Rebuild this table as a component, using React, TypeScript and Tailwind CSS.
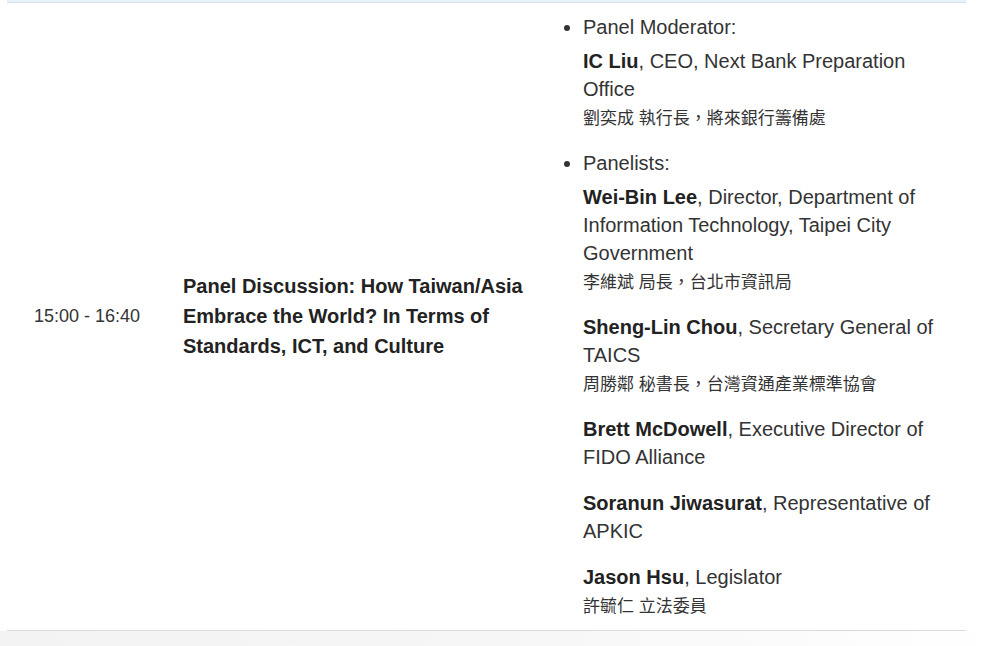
import React from 'react';

type Person = {
  name: string;
  role: string;
  zh?: string;
};

type Group = {
  label: string;
  people: Person[];
};

const groups: Group[] = [
  {
    label: 'Panel Moderator:',
    people: [{ name: 'IC Liu', role: ', CEO, Next Bank Preparation Office', zh: '劉奕成 執行長，將來銀行籌備處' }],
  },
  {
    label: 'Panelists:',
    people: [
      {
        name: 'Wei-Bin Lee',
        role: ', Director, Department of Information Technology, Taipei City Government',
        zh: '李維斌 局長，台北市資訊局',
      },
      { name: 'Sheng-Lin Chou', role: ', Secretary General of TAICS', zh: '周勝鄰 秘書長，台灣資通產業標準協會' },
      { name: 'Brett McDowell', role: ', Executive Director of FIDO Alliance' },
      { name: 'Soranun Jiwasurat', role: ', Representative of APKIC' },
      { name: 'Jason Hsu', role: ', Legislator', zh: '許毓仁 立法委員' },
    ],
  },
];

function Speaker({ p }: { p: Person }) {
  return (
    <div className="leading-[28px]">
      <span className="font-bold text-[#222]">{p.name}</span>
      {p.role}
      {p.zh ? <div className="pt-[4px] text-[17px] leading-[24px]">{p.zh}</div> : null}
    </div>
  );
}

export default function App() {
  return (
    <div
      className="relative h-[646px] w-[999px] overflow-hidden bg-white text-[#333]"
      style={{ fontFamily: '"Liberation Sans", "Noto Sans CJK TC", Arial, sans-serif' }}
    >
      <div className="mx-[7px] w-[959px]">
        <div className="h-[3px] border-b border-[#d6e1eb] bg-[#e9f1f8]" />

        <div className="grid grid-cols-[176px_360px_1fr] items-center border-b border-[#dcdcdc] pb-[11px] pt-[10px]">
          <div className="pl-[27px] text-[18px] leading-[28px]">15:00 - 16:40</div>

          <div className="text-[20px] font-bold leading-[30px] text-[#222]">
            Panel Discussion: How Taiwan/Asia Embrace the World? In Terms of Standards, ICT, and Culture
          </div>

          <ul className="list-disc pl-[40px] pr-[19px] text-[20px] leading-[28px]">
            {groups.map((g, i) => (
              <li key={g.label} className={i > 0 ? 'mt-[18px]' : ''}>
                <div>{g.label}</div>
                <div className="mt-[6px] flex flex-col gap-[18px]">
                  {g.people.map((p) => (
                    <Speaker key={p.name} p={p} />
                  ))}
                </div>
              </li>
            ))}
          </ul>
        </div>
      </div>

      <div className="h-[20px] bg-gradient-to-r from-[#f3f3f3] via-[#f6f6f6] to-white" />
    </div>
  );
}
